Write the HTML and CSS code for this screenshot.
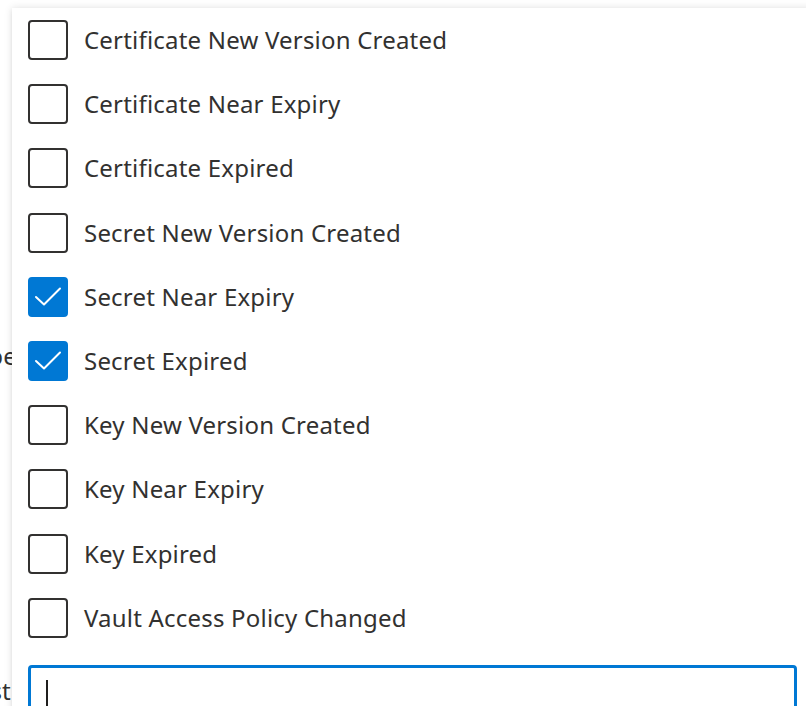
FILE: index.html
```html
<!DOCTYPE html>
<html>
<head>
<meta charset="utf-8">
<link rel="stylesheet" href="styles.css">
</head>
<body>
<div class="page">
  <div class="labels">
    <div class="label label-type">Event type</div>
    <div class="label label-list">Webhook endpoint list</div>
  </div>
</div>
<div class="dropdown">
  <div class="option"><span class="box"></span><span class="text">Certificate New Version Created</span></div>
  <div class="option"><span class="box"></span><span class="text">Certificate Near Expiry</span></div>
  <div class="option"><span class="box"></span><span class="text">Certificate Expired</span></div>
  <div class="option"><span class="box"></span><span class="text">Secret New Version Created</span></div>
  <div class="option"><span class="box checked"><svg viewBox="0 0 40 40" width="40" height="40"><path d="M8 20 L16 27.5 L32 11.5" fill="none" stroke="#fff" stroke-width="2" stroke-linecap="round" stroke-linejoin="round"/></svg></span><span class="text">Secret Near Expiry</span></div>
  <div class="option"><span class="box checked"><svg viewBox="0 0 40 40" width="40" height="40"><path d="M8 20 L16 27.5 L32 11.5" fill="none" stroke="#fff" stroke-width="2" stroke-linecap="round" stroke-linejoin="round"/></svg></span><span class="text">Secret Expired</span></div>
  <div class="option"><span class="box"></span><span class="text">Key New Version Created</span></div>
  <div class="option"><span class="box"></span><span class="text">Key Near Expiry</span></div>
  <div class="option"><span class="box"></span><span class="text">Key Expired</span></div>
  <div class="option"><span class="box"></span><span class="text">Vault Access Policy Changed</span></div>
  <div class="search"><span class="caret"></span></div>
</div>
</body>
</html>
```

FILE: styles.css
```css
html, body {
  margin: 0;
  padding: 0;
  background: #ffffff;
  overflow: hidden;
  width: 806px;
  height: 706px;
  font-family: "Noto Sans", "Open Sans", sans-serif;
  color: #323130;
}
.page {
  position: relative;
  width: 806px;
  height: 706px;
}
.labels {
  width: 20px;
  height: 706px;
  overflow: hidden;
  position: relative;
}
.label {
  position: absolute;
  white-space: nowrap;
  font-size: 24px;
  letter-spacing: 0.2px;
  color: #323130;
}
.label-type { top: 339px; right: 3px; }
.label-list { top: 674px; right: 9px; }
.dropdown {
  position: absolute;
  left: 12px;
  top: 8px;
  width: 801px;
  height: 760px;
  background: #ffffff;
  box-shadow: 0 0 8px rgba(0,0,0,0.12), 0 2px 4px rgba(0,0,0,0.06);
  padding: 0 16px;
  box-sizing: border-box;
}
.option {
  height: 64.2px;
  display: flex;
  align-items: center;
  gap: 16px;
}
.box {
  width: 40px;
  height: 40px;
  box-sizing: border-box;
  border: 2px solid #323130;
  border-radius: 4px;
  flex: none;
  position: relative;
}
.box.checked {
  background: #0078d4;
  border-color: #0078d4;
}
.box.checked svg {
  position: absolute;
  left: -2px;
  top: -2px;
}
.text {
  font-size: 24px;
  letter-spacing: 0.2px;
  line-height: 32px;
  white-space: nowrap;
}
.search {
  margin-top: 15px;
  height: 80px;
  border: 3px solid #0078d4;
  border-radius: 4px;
  box-sizing: border-box;
  position: relative;
}
.caret {
  position: absolute;
  left: 15px;
  top: 12px;
  width: 2px;
  height: 40px;
  background: #201f1e;
}
```
